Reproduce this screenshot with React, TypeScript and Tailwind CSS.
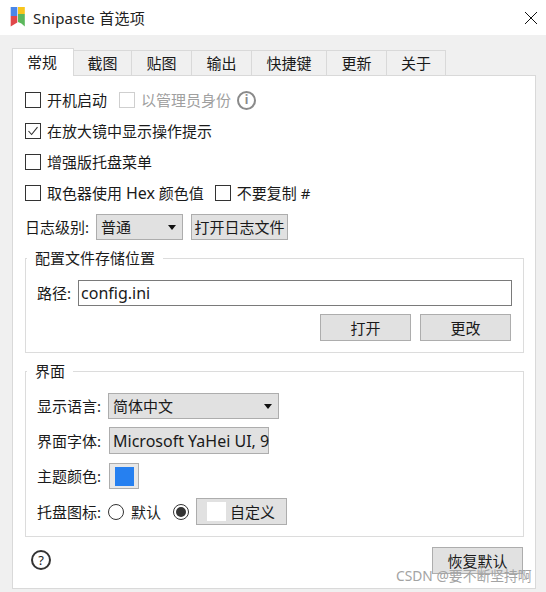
import React from "react";

const tabs = [
  { label: "截图", w: "w-[58px]" },
  { label: "贴图", w: "w-[60px]" },
  { label: "输出", w: "w-[60px]" },
  { label: "快捷键", w: "w-[75px]" },
  { label: "更新", w: "w-[60px]" },
  { label: "关于", w: "w-[59px]" },
];

function Logo() {
  return (
    <svg width="16" height="21" viewBox="0 0 16 21" className="ml-[10px] mt-[-1px]">
      <rect x="0.7" y="0" width="6.6" height="9" fill="#4a86e8" />
      <rect x="8" y="0" width="6.8" height="7" fill="#f8c51c" />
      <path d="M0.7 9H7.3V15.5L0.7 19.5Z" fill="#e0484a" />
      <path d="M8 7H14.8V19.5L11.4 16.5L8 15Z" fill="#5cb85c" />
    </svg>
  );
}

function Check({ checked, disabled }: { checked?: boolean; disabled?: boolean }) {
  return (
    <span
      className={
        disabled
          ? "block w-[16px] h-[16px] shrink-0 border border-[#cfcfcf] bg-white"
          : "flex w-[16px] h-[16px] shrink-0 border border-[#333333] bg-white items-center justify-center"
      }
    >
      {checked && (
        <svg width="14" height="14" viewBox="0 0 14 14" fill="none">
          <path d="M2.5 7L5.6 10.5L11.5 3.2" stroke="#333333" strokeWidth="1.1" />
        </svg>
      )}
    </span>
  );
}

function Radio({ on }: { on?: boolean }) {
  return (
    <span className="w-[16px] h-[16px] shrink-0 rounded-full border border-[#333333] bg-white flex items-center justify-center">
      {on && <span className="w-[10px] h-[10px] rounded-full bg-[#333333]" />}
    </span>
  );
}

function Arrow() {
  return (
    <svg width="8" height="5" viewBox="0 0 8 5">
      <path d="M0 0H8L4 5Z" fill="#111111" />
    </svg>
  );
}

function Row({ children, className }: { children: React.ReactNode; className: string }) {
  return <div className={"flex items-center " + className}>{children}</div>;
}

function Btn({ children, className }: { children: React.ReactNode; className: string }) {
  return (
    <div className={"flex items-center justify-center border border-[#adadad] bg-[#e1e1e1] " + className}>
      {children}
    </div>
  );
}

function Group({ title, className, children }: { title: string; className: string; children: React.ReactNode }) {
  return (
    <div className={"relative border border-[#dcdcdc] " + className}>
      <span className="absolute left-[1px] top-[-11px] bg-white px-[8px] leading-[20px]">{title}</span>
      {children}
    </div>
  );
}

export default function App() {
  return (
    <div className="relative w-[546px] h-[592px] overflow-hidden flex flex-col bg-white text-[15px] leading-[20px] text-[#1a1a1a] font-['Noto_Sans','Noto_Sans_CJK_SC',sans-serif]">
      {/* title bar */}
      <div className="h-[35px] shrink-0 flex items-center">
        <Logo />
        <span className="ml-[7px] text-[15px] tracking-[0.25px] text-[#222222]">Snipaste 首选项</span>
        <svg width="14" height="14" viewBox="0 0 14 14" className="ml-auto mr-[8px]" fill="none">
          <path d="M1 1L13 13M13 1L1 13" stroke="#111111" strokeWidth="1" />
        </svg>
      </div>

      <div className="flex-1 bg-[#f0f0f0] pl-[12px] pr-[10px] pb-[3px] flex flex-col">
        {/* tabs */}
        <div className="flex items-end h-[41px] mb-[-1px] relative z-10">
          <div className="w-[62px] h-[28px] pb-[1px] pr-[2px] flex items-center justify-center bg-white border border-[#d9d9d9] border-b-0">
            常规
          </div>
          {tabs.map((t) => (
            <div
              key={t.label}
              className={t.w + " h-[26px] flex items-center justify-center bg-[#f0f0f0] border border-l-0 border-[#d9d9d9]"}
            >
              {t.label}
            </div>
          ))}
        </div>

        {/* pane */}
        <div className="flex-1 bg-white border border-[#d9d9d9] pl-[12px] pr-[12px] flex flex-col">
          <Row className="mt-[14px] h-[20px]">
            <Check />
            <span className="ml-[6px]">开机启动</span>
            <span className="ml-[12px]"><Check disabled /></span>
            <span className="ml-[6px] text-[#a0a0a0]">以管理员身份</span>
            <span className="ml-[6px] w-[19px] h-[19px] rounded-full border-2 border-[#8a8a8a] text-[#8a8a8a] flex items-center justify-center text-[12px] font-bold">i</span>
          </Row>
          <Row className="mt-[11px] h-[20px]">
            <Check checked />
            <span className="ml-[6px]">在放大镜中显示操作提示</span>
          </Row>
          <Row className="mt-[11px] h-[20px]">
            <Check />
            <span className="ml-[6px]">增强版托盘菜单</span>
          </Row>
          <Row className="mt-[11px] h-[20px]">
            <Check />
            <span className="ml-[6px]">
              取色器使用 <span className="text-[16px]">Hex</span> 颜色值
            </span>
            <span className="ml-[11px]"><Check /></span>
            <span className="ml-[6px]">不要复制 #</span>
          </Row>
          <Row className="mt-[11px] h-[26px]">
            <span>日志级别:</span>
            <div className="ml-[7px] w-[87px] h-[26px] flex items-center justify-between border border-[#adadad] bg-[#e1e1e1] pl-[4px] pr-[6px]">
              普通
              <Arrow />
            </div>
            <Btn className="ml-[8px] w-[97px] h-[26px]">打开日志文件</Btn>
          </Row>

          <Group title="配置文件存储位置" className="mt-[18px] w-[499px] h-[95px]">
            <Row className="mt-[21px] ml-[11px] h-[26px]">
              <span>路径:</span>
              <div className="ml-[7px] w-[434px] h-[26px] border border-[#7a7a7a] flex items-center pl-[2px] text-[16px]">config.ini</div>
            </Row>
            <div className="mt-[8px] flex justify-end gap-[9px] pr-[12px]">
              <Btn className="w-[91px] h-[27px]">打开</Btn>
              <Btn className="w-[91px] h-[27px]">更改</Btn>
            </div>
          </Group>

          <Group title="界面" className="mt-[18px] w-[499px] h-[166px] pl-[11px]">
            <Row className="mt-[21px] h-[26px]">
              <span>显示语言:</span>
              <div className="ml-[7px] w-[171px] h-[26px] flex items-center justify-between border border-[#adadad] bg-[#e1e1e1] pl-[4px] pr-[6px]">
                简体中文
                <Arrow />
              </div>
            </Row>
            <Row className="mt-[8px] h-[27px]">
              <span>界面字体:</span>
              <Btn className="ml-[8px] w-[160px] h-[27px] !justify-start pl-[3px] text-[16px] whitespace-nowrap">Microsoft YaHei UI, 9</Btn>
            </Row>
            <Row className="mt-[9px] h-[26px]">
              <span>主题颜色:</span>
              <Btn className="ml-[8px] w-[30px] h-[26px] !bg-[#e8e8e8]">
                <span className="w-[19px] h-[19px] bg-[#2680f0]" />
              </Btn>
            </Row>
            <Row className="mt-[9px] h-[27px]">
              <span>托盘图标:</span>
              <span className="ml-[7px]"><Radio /></span>
              <span className="ml-[7px]">默认</span>
              <span className="ml-[12px]"><Radio on /></span>
              <Btn className="ml-[7px] w-[91px] h-[27px] !justify-start pl-[10px]">
                <span className="w-[19px] h-[19px] bg-white" />
                <span className="ml-[4px]">自定义</span>
              </Btn>
            </Row>
          </Group>

          <div className="mt-[10px] flex items-start justify-between">
            <span className="ml-[6px] mt-[3px] w-[20px] h-[20px] rounded-full border-2 border-[#333333] flex items-center justify-center text-[13px]">?</span>
            <Btn className="w-[91px] h-[27px]">恢复默认</Btn>
          </div>
        </div>
      </div>

      {/* watermark */}
      <span className="absolute left-[396px] top-[566px] text-[13.8px] text-[#a3a3a3]">CSDN @要不断坚持啊</span>
    </div>
  );
}
